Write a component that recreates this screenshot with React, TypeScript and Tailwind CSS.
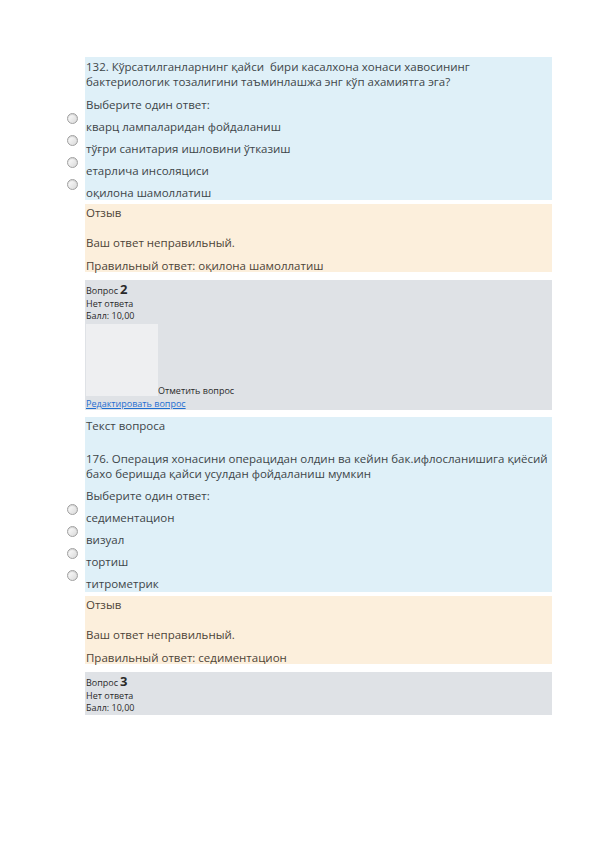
const font = { fontFamily: '"Open Sans", "Noto Sans", sans-serif' };

const Radio = () => (
  <span className="block w-[11px] h-[11px] rounded-full border border-[#a0a0a0] bg-gradient-to-br from-white to-[#d8d8d8] shadow-[inset_0_1px_1px_rgba(0,0,0,0.15)]" />
);

const Option = ({ text }: { text: string }) => (
  <div className="relative h-[22px] flex items-end">
    <span className="absolute left-[-19px] top-[1px]">
      <Radio />
    </span>
    <span className="leading-[15px]">{text}</span>
  </div>
);

const Feedback = ({ answer }: { answer: string }) => (
  <div className="bg-[#fcefdc] text-[#4d4438] text-[11.5px] h-[68px] px-[1px] pt-[1px]">
    <div className="leading-[15px]">Отзыв</div>
    <div className="leading-[15px] mt-[15px]">Ваш ответ неправильный.</div>
    <div className="leading-[15px] mt-[8px]">Правильный ответ: {answer}</div>
  </div>
);

const Info = ({ n }: { n: number }) => (
  <div className="text-[9px] leading-[12px] text-[#2a2a2a]">
    <div className="flex items-baseline gap-[2px]">
      <span className="leading-[12px]">Вопрос</span>
      <span className="text-[13px] leading-[18px] font-bold">{n}</span>
    </div>
    <div>Нет ответа</div>
    <div>Балл: 10,00</div>
  </div>
);

export default function App() {
  return (
    <div className="w-[596px] h-[842px] bg-white" style={font}>
      <div className="ml-[85px] w-[467px] pt-[57px]">
        <div className="bg-[#dff0f8] text-[#3d4548] text-[11.5px] h-[143px] pt-[2px] px-[1px] whitespace-nowrap">
          <p className="leading-[15px]">
            132. Кўрсатилганларнинг қайси&nbsp; бири касалхона хонаси хавосининг
            <br />
            бактериологик тозалигини таъминлашжа энг кўп ахамиятга эга?
          </p>
          <div className="leading-[15px] mt-[8px]">Выберите один ответ:</div>
          <Option text="кварц лампаларидан фойдаланиш" />
          <Option text="тўғри санитария ишловини ўтказиш" />
          <Option text="етарлича инсоляциси" />
          <Option text="оқилона шамоллатиш" />
        </div>
        <div className="mt-[4px]">
          <Feedback answer="оқилона шамоллатиш" />
        </div>
        <div className="mt-[8px] bg-[#dfe2e6] h-[130px] px-[1px]">
          <Info n={2} />
          <div className="flex items-end mt-[2px]">
            <div className="w-[72px] h-[72px] bg-[#eeeff1]" />
            <span className="text-[9px] leading-[11px] text-[#2a2a2a]">Отметить вопрос</span>
          </div>
          <a className="block mt-[2px] text-[9px] leading-[12px] text-[#1f6fd1] underline">Редактировать вопрос</a>
        </div>
        <div className="mt-[7px] bg-[#dff0f8] text-[#3d4548] text-[11.5px] h-[175px] pt-[1px] px-[1px] whitespace-nowrap">
          <div className="leading-[15px]">Текст вопроса</div>
          <p className="leading-[15px] mt-[18px]">
            176. Операция хонасини операцидан олдин ва кейин бак.ифлосланишига қиёсий
            <br />
            бахо беришда қайси усулдан фойдаланиш мумкин
          </p>
          <div className="leading-[15px] mt-[7px]">Выберите один ответ:</div>
          <Option text="седиментацион" />
          <Option text="визуал" />
          <Option text="тортиш" />
          <Option text="титрометрик" />
        </div>
        <div className="mt-[4px]">
          <Feedback answer="седиментацион" />
        </div>
        <div className="mt-[8px] bg-[#dfe2e6] h-[43px] px-[1px]">
          <Info n={3} />
        </div>
      </div>
    </div>
  );
}
